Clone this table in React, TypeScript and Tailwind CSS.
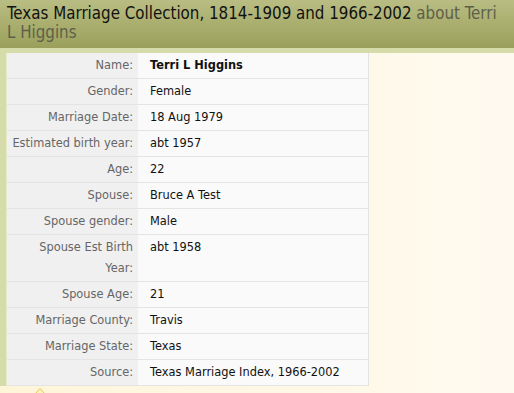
const rows: { label: string; value: string; bold?: boolean }[] = [
  { label: 'Name:', value: 'Terri L Higgins', bold: true },
  { label: 'Gender:', value: 'Female' },
  { label: 'Marriage Date:', value: '18 Aug 1979' },
  { label: 'Estimated birth year:', value: 'abt 1957' },
  { label: 'Age:', value: '22' },
  { label: 'Spouse:', value: 'Bruce A Test' },
  { label: 'Spouse gender:', value: 'Male' },
  { label: 'Spouse Est Birth Year:', value: 'abt 1958' },
  { label: 'Spouse Age:', value: '21' },
  { label: 'Marriage County:', value: 'Travis' },
  { label: 'Marriage State:', value: 'Texas' },
  { label: 'Source:', value: 'Texas Marriage Index, 1966-2002' },
];

export default function App() {
  return (
    <div className="w-[514px] h-[393px] overflow-hidden bg-gradient-to-r from-[#fef5d9] to-[#fffaf0] font-['DejaVu_Sans',sans-serif]">
      {/* Title bar */}
      <div className="h-[48px] bg-gradient-to-b from-[#b9bd83] to-[#9aa05b] px-[7px] pt-[4px]">
        <h1 className="text-[16.8px] leading-[19px] text-[#111] font-['DejaVu_Sans_Condensed','DejaVu_Sans',sans-serif]">
          Texas Marriage Collection, 1814-1909 and 1966-2002{' '}
          <span className="text-[#5e6049]">about Terri L Higgins</span>
        </h1>
      </div>
      <div className="h-[5px] bg-[#d5dca9]" />

      <div className="flex">
        <div className="w-[7px] bg-[#d5dca9] border-r border-[#e6ebc8]" />
        <div className="relative w-[362px] border-r border-[#e2e2e2]">
          <table className="w-full border-collapse text-[11.4px] leading-[21px]">
            <tbody>
              {rows.map((r) => (
                <tr key={r.label} className="border-b border-[#e4e4e4] align-top">
                  <td className="w-[131px] bg-[#f0f0f0] text-right text-[#666] pr-[5px] pl-[4px] py-[2px]">
                    {r.label}
                  </td>
                  <td
                    className={`bg-[#fafafa] text-[#111] pl-[12px] pr-2 py-[2px] ${r.bold ? 'font-bold' : ''}`}
                  >
                    {r.value}
                  </td>
                </tr>
              ))}
            </tbody>
          </table>
          <svg className="absolute left-[26px] top-[334px]" width="14" height="8" viewBox="0 0 14 8">
            <path d="M1 8 L7 1.5 L13 8" fill="#fff4b8" stroke="#e3c65c" strokeWidth="1" />
          </svg>
        </div>
      </div>
    </div>
  );
}
